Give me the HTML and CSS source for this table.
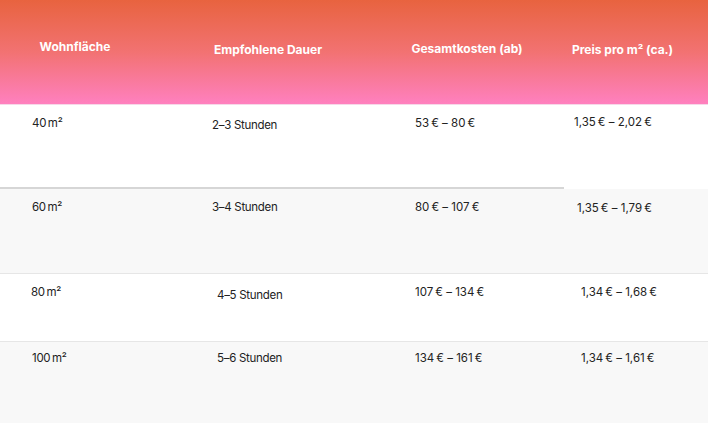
FILE: index.html
```html
<!DOCTYPE html>
<html lang="de">
<head>
  <meta charset="utf-8">
  <title>Preise nach Wohnfläche</title>
  <link rel="stylesheet" href="styles.css">
</head>
<body>
<div class="table">
  <div class="head">
    <div class="th h1">Wohnfläche</div>
    <div class="th h2">Empfohlene Dauer</div>
    <div class="th h3">Gesamtkosten (ab)</div>
    <div class="th h4">Preis pro m² (ca.)</div>
  </div>

  <div class="row r1">
    <div class="td c1 lined">40&#8239;m²</div>
    <div class="td c2 lined down">2–3 Stunden</div>
    <div class="td c3 lined">53&#8239;€ – 80&#8239;€</div>
    <div class="td c4">1,35&#8239;€ – 2,02&#8239;€</div>
  </div>

  <div class="row r2 alt">
    <div class="td c1">60&#8239;m²</div>
    <div class="td c2">3–4 Stunden</div>
    <div class="td c3">80&#8239;€ – 107&#8239;€</div>
    <div class="td c4 shift">1,35&#8239;€ – 1,79&#8239;€</div>
  </div>

  <div class="row r3">
    <div class="td c1">80&#8239;m²</div>
    <div class="td c2 shift down">4–5 Stunden</div>
    <div class="td c3">107&#8239;€ – 134&#8239;€</div>
    <div class="td c4 shift2">1,34&#8239;€ – 1,68&#8239;€</div>
  </div>

  <div class="row r4 alt">
    <div class="td c1">100&#8239;m²</div>
    <div class="td c2 shift">5–6 Stunden</div>
    <div class="td c3">134&#8239;€ – 161&#8239;€</div>
    <div class="td c4 shift2">1,34&#8239;€ – 1,61&#8239;€</div>
  </div>
</div>
</body>
</html>
```

FILE: styles.css
```css
body {
  margin: 0;
  font-family: "Inter", "Liberation Sans", sans-serif;
  color: #222;
  background: #fff;
}

.table {
  width: 708px;
  height: 423px;
  overflow: hidden;
}

.head, .row {
  display: grid;
  grid-template-columns: 168px 198px 198px 144px;
}

.head {
  height: 104px;
  background: linear-gradient(180deg, #e8633f 0%, #f27272 50%, #ff80bf 100%);
  border-bottom: 1px solid #f6d8e8;
}

/* header cells */
.th {
  color: #fff;
  font-weight: 700;
  font-size: 12px;
  text-align: center;
}

.h1 { padding-top: 39px; padding-right: 18px; }
.h2 { padding-top: 42px; padding-left: 2px; }
.h3 { padding-top: 41px; padding-left: 4px; }
.h4 { padding-top: 42px; padding-left: 8px; text-align: left; }

/* body rows */
.row {
  font-size: 11.5px;
  letter-spacing: -0.3px;
  line-height: 16px;
  border-bottom: 1px solid #e6e6e6;
}

.alt { background: #f8f8f8; }

.r1 { height: 84px; border-bottom: none; }
.r2 { height: 84px; }
.r3 { height: 67px; }
.r4 { height: 81px; border-bottom: none; }

.td { padding-top: 10px; }
.r4 .td { padding-top: 8px; }

.c1 { padding-left: 32px; }
.c2 { padding-left: 44px; }
.c3 { padding-left: 49px; }
.c4 { padding-left: 10px; }

.lined { border-bottom: 2px solid #d6d6d6; }
.down { padding-top: 12px; }
.c2.shift { padding-left: 49px; }
.c4.shift { padding-left: 13px; }
.c4.shift2 { padding-left: 17px; }
.r3 .c1 { padding-left: 31px; }
.r3 .c2 { padding-top: 13px; }
.r1 .c4 { padding-top: 9px; }
.r2 .c4 { padding-top: 11px; }
```
